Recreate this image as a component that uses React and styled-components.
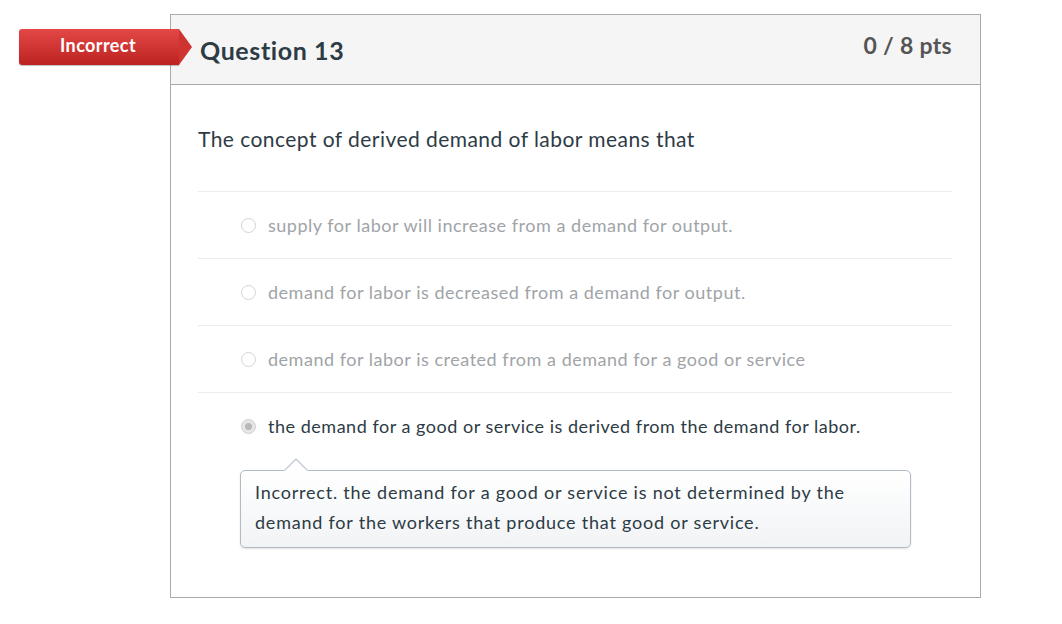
import React from 'react';
import styled, { createGlobalStyle } from 'styled-components';

const GlobalStyle = createGlobalStyle`
  body {
    margin: 0;
    background: #fff;
    font-family: Lato, 'Open Sans', sans-serif;
    color: #2d3b45;
  }
`;

const Page = styled.div`
  padding: 14px 0 0 170px;
`;

const Card = styled.div`
  position: relative;
  width: 809px;
  height: 582px;
  border: 1px solid #aaaaaa;
  background: #fff;
`;

const Badge = styled.div`
  position: absolute;
  left: -152px;
  top: 14px;
  width: 160px;
  height: 36px;
  background: linear-gradient(#e34846, #bc2320);
  border-radius: 3px 0 0 3px;
  box-shadow: 0 1px 1px rgba(0, 0, 0, 0.25);
  color: #fff;
  font-weight: 700;
  font-size: 18px;
  letter-spacing: 0.4px;
  display: flex;
  align-items: center;
  justify-content: center;
  padding: 0 2px 4px 0;
  box-sizing: border-box;

  &::after {
    content: '';
    position: absolute;
    right: -13px;
    top: 0;
    border-top: 18px solid transparent;
    border-bottom: 18px solid transparent;
    border-left: 13px solid #cf3431;
  }
`;

const Header = styled.div`
  height: 69px;
  background: #f5f5f5;
  border-bottom: 1px solid #aaaaaa;
  display: flex;
  justify-content: space-between;
  padding: 0 28px 0 29px;
`;

const Title = styled.h2`
  margin: 0;
  padding-top: 20px;
  font-size: 25px;
  letter-spacing: 0.6px;
  font-weight: 700;
  color: #2d3b45;
`;

const Points = styled.div`
  padding-top: 16px;
  font-size: 23px;
  letter-spacing: 0.3px;
  font-weight: 700;
  color: #555;
`;

const Body = styled.div`
  padding: 0 28px 0 27px;
`;

const Prompt = styled.p`
  margin: 0;
  padding-top: 41px;
  height: 65px;
  box-sizing: content-box;
  font-size: 21px;
  letter-spacing: 0.45px;
  line-height: 26px;
  color: #2d3b45;
  border-bottom: 1px solid #ececec;
`;

const Answer = styled.div`
  height: 66px;
  display: flex;
  align-items: center;
  padding-left: 43px;
  gap: 12px;
  font-size: 18px;
  letter-spacing: 0.52px;
  color: ${p => (p.$selected ? '#2d3b45' : '#a0a4a8')};
  border-bottom: ${p => (p.$last ? 'none' : '1px solid #ececec')};
`;

const Radio = styled.span`
  width: 15px;
  height: 15px;
  border-radius: 50%;
  box-sizing: border-box;
  border: 1px solid #d4d4d4;
  background: #fff;
  position: relative;
  flex: none;

  ${p =>
    p.$checked &&
    `
    background: #e6e6e6;
    border-color: #d0d0d0;
    &::after {
      content: '';
      position: absolute;
      left: 3px;
      top: 3px;
      width: 7px;
      height: 7px;
      border-radius: 50%;
      background: #b8b8b8;
    }
  `}
`;

const Feedback = styled.div`
  position: relative;
  margin: 11px 0 0 42px;
  width: 671px;
  box-sizing: border-box;
  border: 1px solid #b2bac6;
  border-radius: 5px;
  background: linear-gradient(#ffffff, #f1f3f5);
  box-shadow: 0 1px 2px rgba(0, 0, 0, 0.12);
  padding: 6px 14px 10px 14px;
  font-size: 18px;
  letter-spacing: 0.78px;
  line-height: 30px;
  color: #2d3b45;

  &::before {
    content: '';
    position: absolute;
    left: 42px;
    top: -13px;
    border-left: 13px solid transparent;
    border-right: 13px solid transparent;
    border-bottom: 13px solid #c5ccd5;
  }
  &::after {
    content: '';
    position: absolute;
    left: 43px;
    top: -11px;
    border-left: 12px solid transparent;
    border-right: 12px solid transparent;
    border-bottom: 12px solid #fff;
  }
`;

const answers = [
  'supply for labor will increase from a demand for output.',
  'demand for labor is decreased from a demand for output.',
  'demand for labor is created from a demand for a good or service',
  'the demand for a good or service is derived from the demand for labor.',
];

export default function App() {
  return (
    <Page>
      <GlobalStyle />
      <Card>
        <Badge>Incorrect</Badge>
        <Header>
          <Title>Question 13</Title>
          <Points>0 / 8 pts</Points>
        </Header>
        <Body>
          <Prompt>The concept of derived demand of labor means that</Prompt>
          {answers.map((a, i) => (
            <Answer key={i} $selected={i === 3} $last={i === 3}>
              <Radio $checked={i === 3} />
              {a}
            </Answer>
          ))}
          <Feedback>
            Incorrect. the demand for a good or service is not determined by the
            demand for the workers that produce that good or service.
          </Feedback>
        </Body>
      </Card>
    </Page>
  );
}
